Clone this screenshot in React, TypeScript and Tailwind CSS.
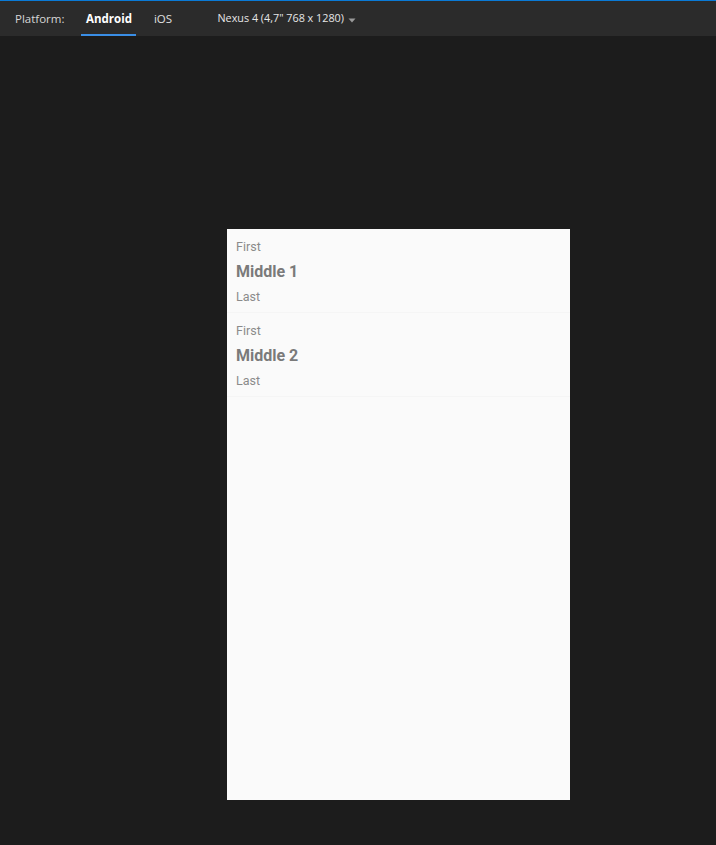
import React from "react";

const items = ["Middle 1", "Middle 2"];

export default function App() {
  return (
    <div className="w-[716px] h-[845px] bg-[#1c1c1c] flex flex-col overflow-hidden" style={{ fontFamily: "'Open Sans', 'Noto Sans', sans-serif" }}>
      <div className="h-px bg-[#0a7ad6]" />
      <div className="h-[35px] bg-[#2b2b2b] flex items-stretch pl-[15px] text-[11.5px]">
        <div className="flex items-center text-[#d6d6d6]">Platform:</div>
        <div className="ml-[17px] w-[55px] flex items-center justify-center text-white font-bold border-b-2 border-[#3a8ee6] pt-[2px]">
          Android
        </div>
        <div className="ml-[11px] w-[31px] flex items-center justify-center text-[#e0e0e0]">iOS</div>
        <div className="ml-[39px] flex items-center text-[#e6e6e6] text-[10.8px]">
          Nexus 4 (4,7" 768 x 1280)
          <svg width="8" height="5" viewBox="0 0 8 5" className="ml-[4px] mt-[3px]">
            <path d="M0.5 0.5 L7.5 0.5 L4 4.5 Z" fill="#9a9a9a" />
          </svg>
        </div>
      </div>
      <div className="flex-1 pl-[227px] pt-[193px]">
        <div className="w-[343px] h-[571px] bg-[#fafafa]" style={{ fontFamily: "Roboto, 'Noto Sans', sans-serif" }}>
          {items.map((m) => (
            <div key={m} className="pl-[9px] pt-[8px] pb-[5px] border-b border-[#f5f5f5]">
              <div className="text-[12.5px] leading-[20px] text-[#8a8a8a]">First</div>
              <div className="text-[16px] leading-[30px] font-bold text-[#7a7a7a]">{m}</div>
              <div className="text-[12.5px] leading-[20px] text-[#8a8a8a]">Last</div>
            </div>
          ))}
        </div>
      </div>
    </div>
  );
}
